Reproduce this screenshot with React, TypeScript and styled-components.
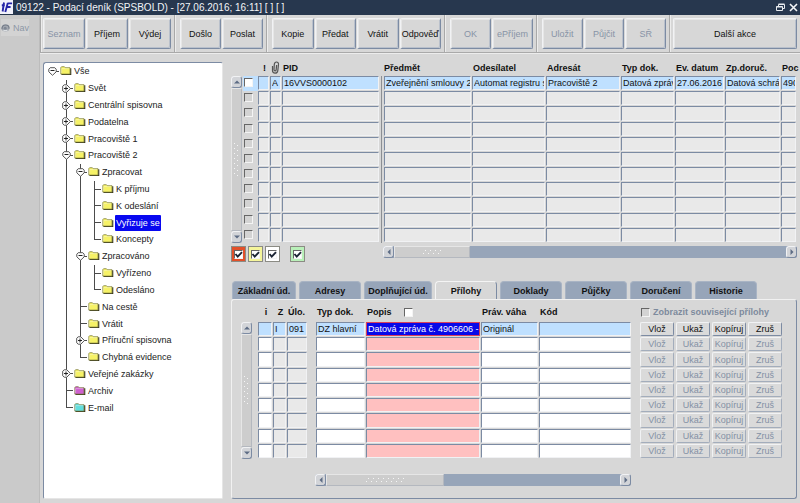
import React from "react";
import styled, { createGlobalStyle, css } from "styled-components";

const FACE = "#d7d7d7";
const EDGE = "#7c8ba3";
const LIGHT = "#f1f2f4";
const TROUGH = "#97a5b9";
const ACTIVE = "#bfe0ff";

const GlobalStyle = createGlobalStyle`
  * { box-sizing: border-box; }
  body { margin: 0; background: ${FACE}; }
  body, button, input { font-family: "Liberation Sans", Arial, sans-serif; font-size: 9px; color: #111; }
  button { padding: 0; margin: 0; }
  svg { display: block; }
`;

const Window = styled.div`
  display: flex;
  flex-direction: column;
  min-height: 100vh;
  background: ${FACE};
`;

const TitleBar = styled.header`
  display: flex;
  align-items: center;
  height: 15px;
  gap: 3px;
  padding-right: 2px;
  background: #27374e;
  color: #f2f4f7;
`;

const Title = styled.h1`
  flex: 1;
  margin: 0;
  font-size: 10px;
  font-weight: 400;
  line-height: 14px;
  white-space: nowrap;
`;

const WindowButton = styled.button`
  display: grid;
  place-items: center;
  width: 10px;
  height: 12px;
  border: 0;
  background: none;
`;

const Body = styled.div`
  display: flex;
  flex: 1;
`;

const NavRail = styled.nav`
  flex: none;
  width: 40px;
  padding: 4px 1px;
  background: #cacaca;
  border-right: 1px solid #bcbcbc;
`;

const NavButton = styled.button`
  display: flex;
  align-items: center;
  gap: 3px;
  width: 28px;
  height: 17px;
  border: 0;
  background: #d3d3d3;
  color: #8d97a6;
`;

const Main = styled.main`
  display: flex;
  flex: 1;
  flex-direction: column;
  min-width: 0;
`;

const Toolbar = styled.div`
  display: grid;
  grid-template-columns: 134px 92px 178px 92px 133px 1fr;
  height: 38px;
  border-bottom: 1px solid #a9a9a9;
  box-shadow: 0 1px 0 #ececec;
`;

const ToolGroup = styled.div`
  display: flex;
  gap: 1px;
  padding: 3px 3px 3px 5px;
  border-left: 1px solid #a9a9a9;
  box-shadow: inset 1px 0 0 #ececec;
  &:first-child {
    padding-left: 2px;
  }
  &:last-child {
    padding-left: 3px;
  }
`;

const bevel = css`
  border: 1px solid;
  border-color: ${LIGHT} ${EDGE} ${EDGE} ${LIGHT};
`;

const ToolButton = styled.button`
  ${bevel}
  flex: 1 1 0;
  min-width: 0;
  border-radius: 2px;
  background: ${FACE};
  box-shadow: inset 1px 1px 0 #e6e6e6, inset -1px -1px 0 #b9c0cb;
  white-space: nowrap;
  &:disabled {
    color: #8793a6;
  }
`;

const Content = styled.div`
  display: flex;
  flex: 1;
  gap: 8px;
  padding: 6px 3px 4px 3px;
`;

const TreePanel = styled.ul`
  display: grid;
  grid-auto-rows: 1fr;
  align-self: stretch;
  align-content: start;
  flex: none;
  width: 180px;
  margin: 3px 0 0;
  padding: 0 0 82px 1px;
  list-style: none;
  background: #fff;
  border: 1px solid;
  border-color: ${EDGE} #e6e6e6 #e6e6e6 ${EDGE};
  border-radius: 3px 2px 2px 2px;
`;

const TreeRow = styled.li`
  display: flex;
  align-items: center;
  min-height: 0;
`;

const Guide = styled.span<{ $line: "none" | "full" | "half"; $arm: boolean }>`
  display: grid;
  place-items: center;
  align-self: stretch;
  width: 14px;
  background-image: linear-gradient(#4c4c4c, #4c4c4c), linear-gradient(#4c4c4c, #4c4c4c);
  background-repeat: no-repeat;
  background-position: 7px 0, 7px 50%;
  background-size: ${(p) => (p.$line === "none" ? "0 0" : p.$line === "full" ? "1px 100%" : "1px 50%")},
    ${(p) => (p.$arm ? "7px 1px" : "0 0")};
`;

const Toggle = styled.button`
  display: block;
  border: 0;
  background: none;
`;

const TreeLabel = styled.button<{ $selected: boolean }>`
  margin-left: 1px;
  padding: 0 1px;
  height: 16px;
  border: 0;
  border-radius: 1px;
  white-space: nowrap;
  background: ${(p) => (p.$selected ? "#0808f0" : "none")};
  color: ${(p) => (p.$selected ? "#fff" : "#222")};
`;

const Work = styled.div`
  display: flex;
  flex: 1;
  flex-direction: column;
  min-width: 0;
`;

const Records = styled.section`
  display: flex;
  gap: 1px;
`;

const ScrollSlot = styled.div<{ $top: number }>`
  display: flex;
  flex: none;
  width: 11px;
  padding-top: ${(p) => p.$top}px;
`;

const Track = styled.div<{ $horizontal?: boolean }>`
  display: flex;
  flex: 1;
  flex-direction: ${(p) => (p.$horizontal ? "row" : "column")};
  min-width: 0;
  ${(p) => p.$horizontal && "height: 12px;"}
  background: ${(p) => (p.$horizontal ? TROUGH : "#cacaca")};
  border-radius: 3px;
`;

const Arrow = styled.button`
  ${bevel}
  display: grid;
  place-items: center;
  flex: none;
  width: 11px;
  height: 12px;
  border-radius: 3px;
  background: #d2d4d8;
`;

const Thumb = styled.div<{ $size?: number }>`
  display: grid;
  place-items: center;
  ${(p) => (p.$size ? `width: ${p.$size}px;` : "flex: 1;")}
  border: 1px solid;
  border-color: #e6e6e6 #b4b8bf #b4b8bf #e6e6e6;
  background: #cdcdcd;
`;

const Table = styled.table`
  display: block;
  flex: 1;
  min-width: 0;
  border-collapse: collapse;
`;

const HeadGroup = styled.thead`
  display: block;
`;

const BodyGroup = styled.tbody<{ $height: number }>`
  display: grid;
  grid-auto-rows: 1fr;
  height: ${(p) => p.$height}px;
`;

const RecordRow = styled.tr<{ $head?: boolean }>`
  display: grid;
  grid-template-columns: 15px 12px 12px 99px 91px 74px minmax(75px, 1fr) 54px 50px 56px 16px;
  min-height: 0;
  ${(p) => p.$head && "height: 17px;"}
`;

const DetailRow = styled.tr<{ $head?: boolean }>`
  display: grid;
  grid-template-columns: 15px 14px 29px 50px 115px 58px minmax(101px, 1fr) 36px 36px 36px 36px;
  min-height: 0;
  ${(p) => p.$head && "height: 22px; padding-top: 2px;"}
`;

const Th = styled.th<{ $span?: number; $muted?: boolean; $center?: boolean }>`
  display: flex;
  align-items: center;
  justify-content: ${(p) => (p.$center ? "center" : "flex-start")};
  gap: 2px;
  padding: 0 0 0 1px;
  white-space: nowrap;
  font-weight: 700;
  text-align: left;
  color: ${(p) => (p.$muted ? "#7d8a9d" : "#111")};
  ${(p) => p.$span && `grid-column: span ${p.$span};`}
`;

const Td = styled.td<{ $divider?: boolean; $right?: number; $fill?: boolean }>`
  display: flex;
  min-width: 0;
  min-height: 0;
  padding: 0 ${(p) => p.$right ?? 0}px 0 ${(p) => (p.$divider ? 2 : 0)}px;
  ${(p) => p.$divider && `border-left: 1px solid #8c8f94;`}
  ${(p) => p.$fill && `background: ${ACTIVE};`}
`;

type Tone = "plain" | "white" | "pink" | "active" | "selected";
const toneColor: Record<Tone, string> = {
  plain: "#e9e9e9",
  white: "#ffffff",
  pink: "#ffc0c0",
  active: ACTIVE,
  selected: "#0808e8",
};

const Field = styled.input<{ $tone: Tone }>`
  flex: 1;
  width: 0;
  min-width: 0;
  margin: 0 1px 1px 0;
  padding: 0 0 0 1px;
  border: 1px solid;
  border-color: ${EDGE} ${LIGHT} ${LIGHT} ${EDGE};
  border-radius: 0;
  outline: 0;
  background: ${(p) => toneColor[p.$tone]};
  ${(p) => p.$tone === "selected" && `color: #fff; border-color: #d8405c;`}
`;

const RowCheck = styled.input<{ $white?: boolean }>`
  appearance: none;
  flex: none;
  width: 9px;
  height: 9px;
  margin: 2px 1px;
  border: 1px solid;
  border-color: #666 #f4f4f4 #f4f4f4 #666;
  background: ${(p) => (p.$white ? "#fff" : "#d3d3d3")};
`;

const HeadCheck = styled(RowCheck)`
  margin: 0;
`;

const PopisCheck = styled(HeadCheck)`
  margin-left: 10px;
`;

const CheckLabel = styled.label`
  display: flex;
  align-items: center;
  gap: 3px;
`;

const RecordsFooter = styled.div`
  display: flex;
  align-items: flex-start;
  padding-top: 3px;
`;

const Filters = styled.div`
  display: flex;
  gap: 2px;
  flex: none;
  width: 152px;
`;

const FilterBox = styled.label<{ $color: string; $apart?: boolean }>`
  display: grid;
  place-items: center;
  width: 15px;
  height: 16px;
  margin-left: ${(p) => (p.$apart ? 8 : 0)}px;
  border: 1px solid #8b8b84;
  background: ${(p) => p.$color};
  > * {
    grid-area: 1 / 1;
  }
  > svg {
    pointer-events: none;
  }
`;

const Tabs = styled.div`
  display: flex;
  gap: 3px;
  height: 18px;
  margin-top: 19px;
  padding-left: 1px;
`;

const Tab = styled.button<{ $active: boolean; $width: number }>`
  width: ${(p) => p.$width}px;
  font-weight: 700;
  white-space: nowrap;
  border: 1px solid;
  border-bottom: 0;
  border-color: ${(p) => (p.$active ? "#f4f4f4 #7c8ba3 #f4f4f4 #f4f4f4" : "#a9b4c4")};
  border-radius: 4px 4px 0 0;
  background: ${(p) => (p.$active ? FACE : TROUGH)};
`;

const DetailPanel = styled.section`
  flex: 1;
  padding: 0 12px 0 9px;
  border: 1px solid;
  border-color: #f1f1f1 ${EDGE} ${EDGE} #f1f1f1;
  border-radius: 3px;
`;

const DetailBody = styled.div`
  display: flex;
  gap: 6px;
`;

const DetailScroll = styled.div`
  display: flex;
  margin: 15px 153px 0 74px;
`;

const RowButton = styled.button`
  ${bevel}
  flex: 1;
  min-width: 0;
  margin-right: 2px;
  margin-bottom: 1px;
  border-radius: 2px;
  background: #dadada;
  &:disabled {
    color: #8491a5;
    border-color: ${LIGHT} #a3adbc #a3adbc ${LIGHT};
  }
`;

const HeadInset = styled.span`
  padding-left: 2px;
`;

const Spacer = styled.span`
  flex: 1;
`;

/* ---------- drawings ---------- */

const Logo = () => (
  <svg width="13" height="15" viewBox="0 0 13 15" aria-hidden="true">
    <rect width="13" height="14" fill="#f2f2fb" />
    <path d="M4 2.5 2.6 11.5M1.8 5.2h3M7.8 3 5.3 12M7.5 3.4h4.6M6.6 7h4" stroke="#2525a8" strokeWidth="1.9" fill="none" />
  </svg>
);

const RestoreIcon = () => (
  <svg width="9" height="9" viewBox="0 0 9 9" fill="none" stroke="#e8ebef" aria-hidden="true">
    <path d="M2.5 3V1.5h6v4H7M2.5 1h6" />
    <path d="M.5 3.5h6v4h-6zM.5 4h6" />
  </svg>
);

const CloseIcon = () => (
  <svg width="9" height="9" viewBox="0 0 9 9" stroke="#f4f5f7" strokeWidth="1.6" aria-hidden="true">
    <path d="m1 1 7 7M8 1 1 8" />
  </svg>
);

const NavIcon = () => (
  <svg width="9" height="8" viewBox="0 0 9 8" aria-hidden="true">
    <ellipse cx="4.5" cy="4" rx="4" ry="3.6" fill="#a4a9b1" />
    <path d="M1 5.2Q.8 1 4.6 1T8 4.8" stroke="#737b88" strokeWidth="1.1" fill="none" />
    <circle cx="4.2" cy="4.2" r="1.5" fill="#7f8794" />
    <path d="M2.4 6.6h4" stroke="#e3e5e8" />
  </svg>
);

const ClipIcon = () => (
  <svg width="9" height="13" viewBox="0 0 9 13" fill="none" stroke="#555" aria-hidden="true">
    <path d="M1.5 5v4.6c0 3.4 5 3.4 5.3 0L7.5 3.4C7.7.2 3.6.2 3.3 3.4L3 8.6c0 1.8 2 1.8 2.2 0L5.6 4" strokeWidth="1.2" />
  </svg>
);

const Expander = ({ open }: { open: boolean }) =>
  open ? (
    <svg width="9" height="9" viewBox="0 0 9 9" fill="#fff" stroke="#555" aria-hidden="true">
      <path d="M2.2.7h4.6l1.4 1.5v2.6L4.5 8.3.8 4.8V2.2z" />
      <path d="M2.5 3.5h4" stroke="#222" />
    </svg>
  ) : (
    <svg width="9" height="9" viewBox="0 0 9 9" fill="#fff" stroke="#555" aria-hidden="true">
      <path d="M2.2.8h2.6l3.6 3.7-3.6 3.7H2.2L.7 6.8V2.2z" />
      <path d="M2 4.5h4M4 2.5v4" stroke="#222" />
    </svg>
  );

const FolderSvg = styled.svg`
  flex: none;
  margin-left: 1px;
`;

const Folder = ({ color }: { color: string }) => (
  <FolderSvg width="12" height="10" viewBox="0 0 12 10" aria-hidden="true">
    <path d="M1.5 8.5h9.2V2.2" stroke="#3a3a20" strokeWidth="1.2" fill="none" />
    <path d="M.8 1.6 1.6.7h2.8l.9 1h4.7v6.4H.8z" fill={color} stroke="#77773a" strokeWidth=".7" />
    <path d="M1.6 7V2.6h7.6" stroke="#fff" strokeOpacity=".5" strokeWidth=".7" fill="none" />
  </FolderSvg>
);

const arrowPath = {
  up: "M0 4.5h6L3 1.5z",
  down: "M0 1.5h6L3 4.5z",
  left: "M4.5 0v6L1.5 3z",
  right: "M1.5 0v6L4.5 3z",
};

const ArrowIcon = ({ dir }: { dir: keyof typeof arrowPath }) => (
  <svg width="6" height="6" viewBox="0 0 6 6" aria-hidden="true">
    <path d={arrowPath[dir]} fill="#5d6c84" />
  </svg>
);

const Grip = ({ count, vertical }: { count: number; vertical?: boolean }) => {
  const long = count * 5 + 1;
  const dots = Array.from({ length: count }, (_, i) => [i * 5 + 3, 1, i * 5 + 1, 4]);
  return (
    <svg width={vertical ? 7 : long} height={vertical ? long : 7} aria-hidden="true">
      {dots.map(([a, b, c, d]) => (
        <g key={a} fill="#f6f6f6">
          <rect x={vertical ? d : a} y={vertical ? a : b} width="1" height="1" />
          <rect x={vertical ? b : c} y={vertical ? c : d} width="1" height="1" />
        </g>
      ))}
    </svg>
  );
};

const Tick = () => (
  <svg width="9" height="9" viewBox="0 0 9 9" fill="none" stroke="#1b2433" strokeWidth="1.9" aria-hidden="true">
    <path d="m1.5 4 2.2 2.6L8 2.2" />
  </svg>
);

/* ---------- data ---------- */

interface Node {
  name: string;
  closed?: boolean;
  color?: string;
  children?: Node[];
}

const tree: Node = {
  name: "Vše",
  children: [
    { name: "Svět", closed: true },
    { name: "Centrální spisovna", closed: true },
    { name: "Podatelna", closed: true },
    { name: "Pracoviště 1", closed: true },
    {
      name: "Pracoviště 2",
      children: [
        {
          name: "Zpracovat",
          children: [{ name: "K příjmu" }, { name: "K odeslání" }, { name: "Vyřizuje se" }, { name: "Koncepty" }],
        },
        { name: "Zpracováno", children: [{ name: "Vyřízeno" }, { name: "Odesláno" }] },
        { name: "Na cestě" },
        { name: "Vrátit" },
        { name: "Příruční spisovna", closed: true },
        { name: "Chybná evidence" },
      ],
    },
    { name: "Veřejné zakázky", closed: true },
    { name: "Archiv", color: "#cf5fd0" },
    { name: "E-mail", color: "#62dede" },
  ],
};

interface FlatNode {
  node: Node;
  trail: boolean[];
}

const flatten = (node: Node, trail: boolean[] = []): FlatNode[] => [
  { node, trail },
  ...(node.children ?? []).flatMap((child, i, all) => flatten(child, [...trail, i < all.length - 1])),
];

const toolGroups: { label: string; off?: boolean }[][] = [
  [{ label: "Seznam", off: true }, { label: "Příjem" }, { label: "Výdej" }],
  [{ label: "Došlo" }, { label: "Poslat" }],
  [{ label: "Kopie" }, { label: "Předat" }, { label: "Vrátit" }, { label: "Odpověď" }],
  [{ label: "OK", off: true }, { label: "ePříjem", off: true }],
  [{ label: "Uložit", off: true }, { label: "Půjčit", off: true }, { label: "SŘ", off: true }],
  [{ label: "Další akce" }],
];

const recordHeads = ["!", "Příloha", "PID", "Předmět", "Odesílatel", "Adresát", "Typ dok.", "Ev. datum", "Zp.doruč.", "Poc"];
const record = ["", "A", "16VVS0000102", "Zveřejnění smlouvy 25", "Automat registru s", "Pracoviště 2", "Datová zpráva", "27.06.2016", "Datová schrá", "490"];

const detailHeads = ["i", "Z", "Úlo.", "Typ dok.", "Popis", "Práv. váha", "Kód"];
const detail = ["", "I", "091", "DZ hlavní", "Datová zpráva č. 4906606 -", "Originál", ""];
const detailTones: Tone[] = ["white", "plain", "plain", "white", "pink", "white", "white"];
const actions = ["Vlož", "Ukaž", "Kopíruj", "Zruš"];

const tabs: [string, number][] = [
  ["Základní úd.", 64],
  ["Adresy", 62],
  ["Doplňující úd.", 68],
  ["Přílohy", 62],
  ["Doklady", 62],
  ["Půjčky", 62],
  ["Doručení", 62],
  ["Historie", 62],
];

const filters = [
  { name: "Červené", color: "#e2502a" },
  { name: "Žluté", color: "#f5f59a" },
  { name: "Bílé", color: "#ffffff" },
  { name: "Zelené", color: "#b9f0b9", apart: true },
];

/* ---------- parts ---------- */

const VerticalScroll = ({ top, grip }: { top: number; grip: number }) => (
  <ScrollSlot $top={top}>
    <Track>
      <Arrow aria-label="Nahoru"><ArrowIcon dir="up" /></Arrow>
      <Thumb><Grip count={grip} vertical /></Thumb>
      <Arrow aria-label="Dolů"><ArrowIcon dir="down" /></Arrow>
    </Track>
  </ScrollSlot>
);

const HorizontalScroll = ({ thumb, grip }: { thumb: number; grip: number }) => (
  <Track $horizontal>
    <Arrow aria-label="Vlevo"><ArrowIcon dir="left" /></Arrow>
    <Thumb $size={thumb}><Grip count={grip} /></Thumb>
    <Spacer />
    <Arrow aria-label="Vpravo"><ArrowIcon dir="right" /></Arrow>
  </Track>
);

const Tree = () => (
  <TreePanel role="tree" aria-label="Složky">
    {flatten(tree).map(({ node, trail }) => {
      const expandable = Boolean(node.children || node.closed);
      const more = trail[trail.length - 1];
      return (
        <TreeRow key={node.name} role="treeitem" aria-level={trail.length + 1}>
          {trail.length > 0 && <Guide $line="none" $arm={false} />}
          {trail.slice(0, -1).map((on, i) => (
            <Guide key={i} $line={on ? "full" : "none"} $arm={false} />
          ))}
          <Guide $line={trail.length === 0 ? "none" : more ? "full" : "half"} $arm>
            {expandable && (
              <Toggle aria-label={node.closed ? "Rozbalit" : "Sbalit"}>
                <Expander open={!node.closed} />
              </Toggle>
            )}
          </Guide>
          <Folder color={node.color ?? "#f6f266"} />
          <TreeLabel $selected={node.name === "Vyřizuje se"}>{node.name}</TreeLabel>
        </TreeRow>
      );
    })}
  </TreePanel>
);

const RecordsTable = () => (
  <Table>
    <HeadGroup>
      <RecordRow $head>
        <Th aria-label="Výběr" />
        {recordHeads.map((head, i) => (
          <Th key={head} $center={i === 0} aria-label={head}>
            {i === 1 ? <ClipIcon /> : i === 3 ? <HeadInset>{head}</HeadInset> : head}
          </Th>
        ))}
      </RecordRow>
    </HeadGroup>
    <BodyGroup $height={167}>
      {Array.from({ length: 11 }, (_, row) => (
        <RecordRow key={row}>
          <Td $fill={row === 0}>
            <RowCheck type="checkbox" aria-label={`Vybrat řádek ${row + 1}`} $white={row === 0} />
          </Td>
          {recordHeads.map((head, i) => (
            <Td key={head} $divider={i === 3} $right={i === 2 ? 1 : 0}>
              <Field
                readOnly
                aria-label={`${head} ${row + 1}`}
                $tone={row === 0 ? "active" : "plain"}
                defaultValue={row === 0 ? record[i] : ""}
              />
            </Td>
          ))}
        </RecordRow>
      ))}
    </BodyGroup>
  </Table>
);

const DetailTable = () => (
  <Table>
    <HeadGroup>
      <DetailRow $head>
        {detailHeads.map((head, i) => (
          <Th key={head} $center={i < 2}>
            {head}
            {head === "Popis" && <PopisCheck type="checkbox" aria-label="Popis" $white />}
          </Th>
        ))}
        <Th $span={4} $muted>
          <CheckLabel>
            <HeadCheck type="checkbox" disabled />
            Zobrazit související přílohy
          </CheckLabel>
        </Th>
      </DetailRow>
    </HeadGroup>
    <BodyGroup $height={137}>
      {Array.from({ length: 9 }, (_, row) => (
        <DetailRow key={row}>
          {detailHeads.map((head, i) => (
            <Td key={head} $right={i === 2 ? 8 : i === 6 ? 8 : 0}>
              <Field
                aria-label={`${head} ${row + 1}`}
                $tone={row > 0 ? detailTones[i] : i === 4 ? "selected" : "active"}
                defaultValue={row === 0 ? detail[i] : ""}
              />
            </Td>
          ))}
          {actions.map((action) => (
            <Td key={action}>
              <RowButton disabled={row > 0}>{action}</RowButton>
            </Td>
          ))}
        </DetailRow>
      ))}
    </BodyGroup>
  </Table>
);

export default function App() {
  return (
    <Window>
      <GlobalStyle />
      <TitleBar>
        <Logo />
        <Title>09122 - Podací deník (SPSBOLD) - [27.06.2016; 16:11] [ ] [ ]</Title>
        <WindowButton aria-label="Obnovit"><RestoreIcon /></WindowButton>
        <WindowButton aria-label="Zavřít"><CloseIcon /></WindowButton>
      </TitleBar>
      <Body>
        <NavRail>
          <NavButton><NavIcon />Nav</NavButton>
        </NavRail>
        <Main>
          <Toolbar role="toolbar">
            {toolGroups.map((group) => (
              <ToolGroup key={group[0].label}>
                {group.map((tool) => (
                  <ToolButton key={tool.label} disabled={tool.off}>{tool.label}</ToolButton>
                ))}
              </ToolGroup>
            ))}
          </Toolbar>
          <Content>
            <Tree />
            <Work>
              <Records>
                <VerticalScroll top={17} grip={7} />
                <RecordsTable />
              </Records>
              <RecordsFooter>
                <Filters>
                  {filters.map((f) => (
                    <FilterBox key={f.name} $color={f.color} $apart={f.apart}>
                      <HeadCheck type="checkbox" defaultChecked aria-label={f.name} $white />
                      <Tick />
                    </FilterBox>
                  ))}
                </Filters>
                <HorizontalScroll thumb={76} grip={4} />
              </RecordsFooter>
              <Tabs role="tablist">
                {tabs.map(([name, width]) => (
                  <Tab key={name} role="tab" $active={name === "Přílohy"} $width={width}>{name}</Tab>
                ))}
              </Tabs>
              <DetailPanel>
                <DetailBody>
                  <VerticalScroll top={22} grip={6} />
                  <DetailTable />
                </DetailBody>
                <DetailScroll>
                  <HorizontalScroll thumb={118} grip={8} />
                </DetailScroll>
              </DetailPanel>
            </Work>
          </Content>
        </Main>
      </Body>
    </Window>
  );
}
